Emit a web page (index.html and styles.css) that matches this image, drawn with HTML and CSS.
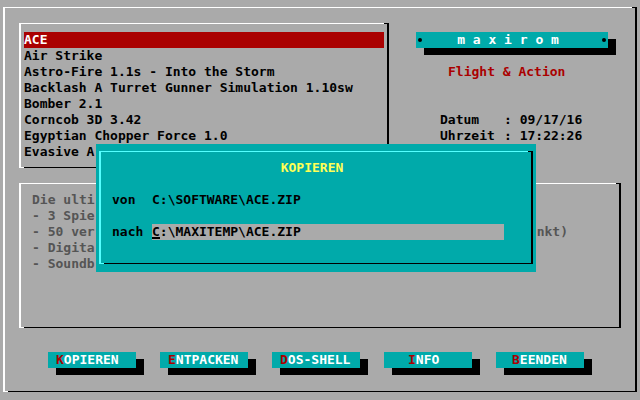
FILE: index.html
```html
<!DOCTYPE html>
<html lang="de">
<head>
<meta charset="utf-8">
<title>maxirom</title>
<link rel="stylesheet" href="styles.css">
</head>
<body>
<main class="screen bevel">
  <div class="top">
    <ul class="list bevel" role="listbox" aria-label="Programme">
      <li class="item item-selected" role="option" aria-selected="true">ACE</li>
      <li class="item" role="option">Air Strike</li>
      <li class="item" role="option">Astro-Fire 1.1s - Into the Storm</li>
      <li class="item" role="option">Backlash A Turret Gunner Simulation 1.10sw</li>
      <li class="item" role="option">Bomber 2.1</li>
      <li class="item" role="option">Corncob 3D 3.42</li>
      <li class="item" role="option">Egyptian Chopper Force 1.0</li>
      <li class="item" role="option">Evasive A</li>
    </ul>
    <aside class="side">
      <h1 class="brand"><span class="dot"></span><span class="brand-name">m a x i r o m</span><span class="dot"></span></h1>
      <p class="category">Flight &amp; Action</p>
      <dl class="clock">
        <dt>Datum</dt><dd>: 09/17/16</dd>
        <dt>Uhrzeit</dt><dd>: 17:22:26</dd>
      </dl>
    </aside>
  </div>
  <section class="info bevel">
    <p class="line">Die ulti</p>
    <p class="line">- 3 Spie</p>
    <p class="line"><span>- 50 ver</span><span>nkt)</span></p>
    <p class="line">- Digita</p>
    <p class="line">- Soundb</p>
  </section>
  <nav class="actions">
    <button class="action" type="button"><span class="key">K</span>OPIEREN</button>
    <button class="action" type="button"><span class="key">E</span>NTPACKEN</button>
    <button class="action" type="button"><span class="key">D</span>OS-SHELL</button>
    <button class="action action-short" type="button"><span class="key">I</span>NFO</button>
    <button class="action action-medium" type="button"><span class="key">B</span>EENDEN</button>
  </nav>
</main>
<form class="dialog" role="dialog" aria-labelledby="dialog-title">
  <div class="dialog-frame bevel">
    <h2 class="dialog-title" id="dialog-title">KOPIEREN</h2>
    <div class="row">
      <span class="label">von</span>
      <span>C:\SOFTWARE\ACE.ZIP</span>
    </div>
    <div class="row">
      <label class="label" for="target">nach</label>
      <span class="field">
        <input class="input" id="target" type="text" value="C:\MAXITEMP\ACE.ZIP" spellcheck="false">
        <span class="cursor"></span>
      </span>
    </div>
  </div>
</form>
</body>
</html>
```
FILE: styles.css
```css
:root {
  --gray: #aaaaaa;
  --teal: #00aaaa;
  --red: #aa0000;
  --light: #ffffff;
}

* {
  box-sizing: border-box;
  margin: 0;
  padding: 0;
}

body {
  position: relative;
  padding: 7px 3px 8px;
  background: var(--gray);
  color: #000000;
  font: bold 13px/16px "DejaVu Sans Mono", "Liberation Mono", monospace;
}

/* Raised frame: light top and left, black right and bottom */
.bevel {
  position: relative;
  border-style: solid;
  border-width: 1px 2px;
  border-color: var(--light) #000000 #000000 var(--light);
}

.bevel::before,
.bevel::after {
  content: "";
  position: absolute;
  width: 5px;
  height: 1px;
}

.bevel::before {
  top: -1px;
  right: -2px;
  background: #000000;
}

.bevel::after {
  bottom: -1px;
  left: -2px;
  background: var(--light);
}

.screen {
  display: flex;
  flex-direction: column;
  padding: 15px 14px 23px;
}

.top {
  display: flex;
  gap: 27px;
}

.list {
  flex: 1;
  min-width: 0;
  padding: 8px 3px 7px;
  list-style: none;
}

.item {
  white-space: nowrap;
}

.item-selected {
  background: var(--red);
  color: #ffffff;
}

.side {
  flex: 0 0 205px;
  padding: 9px 13px 0 0;
}

.brand {
  display: flex;
  align-items: center;
  justify-content: space-between;
  padding: 0 2px;
  background: var(--teal);
  box-shadow: 8px 7px #000000;
  color: #ffffff;
  font: inherit;
}

.brand-name {
  padding-right: 8px;
}

.dot {
  width: 4px;
  height: 4px;
  border-radius: 2px;
  background: #000000;
}

.category {
  margin-top: 16px;
  padding-left: 32px;
  color: var(--red);
}

.clock {
  display: grid;
  grid-template-columns: 64px 1fr;
  margin-top: 32px;
  padding-left: 24px;
}

.info {
  min-height: 145px;
  margin-top: 15px;
  padding: 8px 51px 8px 11px;
  color: #555555;
}

.line {
  display: flex;
  justify-content: space-between;
}

.actions {
  display: grid;
  grid-template-columns: repeat(5, minmax(0, 1fr));
  gap: 24px;
  margin-top: 24px;
  padding: 0 37px 0 29px;
}

.action {
  padding: 0 8px;
  border: 0;
  background: var(--teal);
  box-shadow: 8px 7px #000000;
  color: #ffffff;
  font: inherit;
  text-align: left;
  white-space: nowrap;
}

.action-medium {
  padding: 0 16px;
}

.action-short {
  padding: 0 24px;
}

.key {
  color: var(--red);
}

.dialog {
  --light: #55ffff;
  position: absolute;
  top: 144px;
  left: 96px;
  right: 104px;
  padding: 7px 3px 8px;
  background: var(--teal);
}

.dialog-frame {
  display: flex;
  flex-direction: column;
  gap: 16px;
  padding: 8px 27px 23px 11px;
}

.dialog-title {
  padding-left: 8px;
  color: #ffff55;
  font: inherit;
  text-align: center;
}

.row {
  display: flex;
}

.label {
  flex: 0 0 40px;
}

.field {
  position: relative;
  flex: 1;
  display: flex;
}

.input {
  width: 100%;
  height: 16px;
  border: 0;
  outline: 0;
  background: var(--gray);
  color: #000000;
  font: inherit;
}

.cursor {
  position: absolute;
  bottom: 1px;
  left: 0;
  width: 8px;
  height: 2px;
  background: #000000;
}
```
